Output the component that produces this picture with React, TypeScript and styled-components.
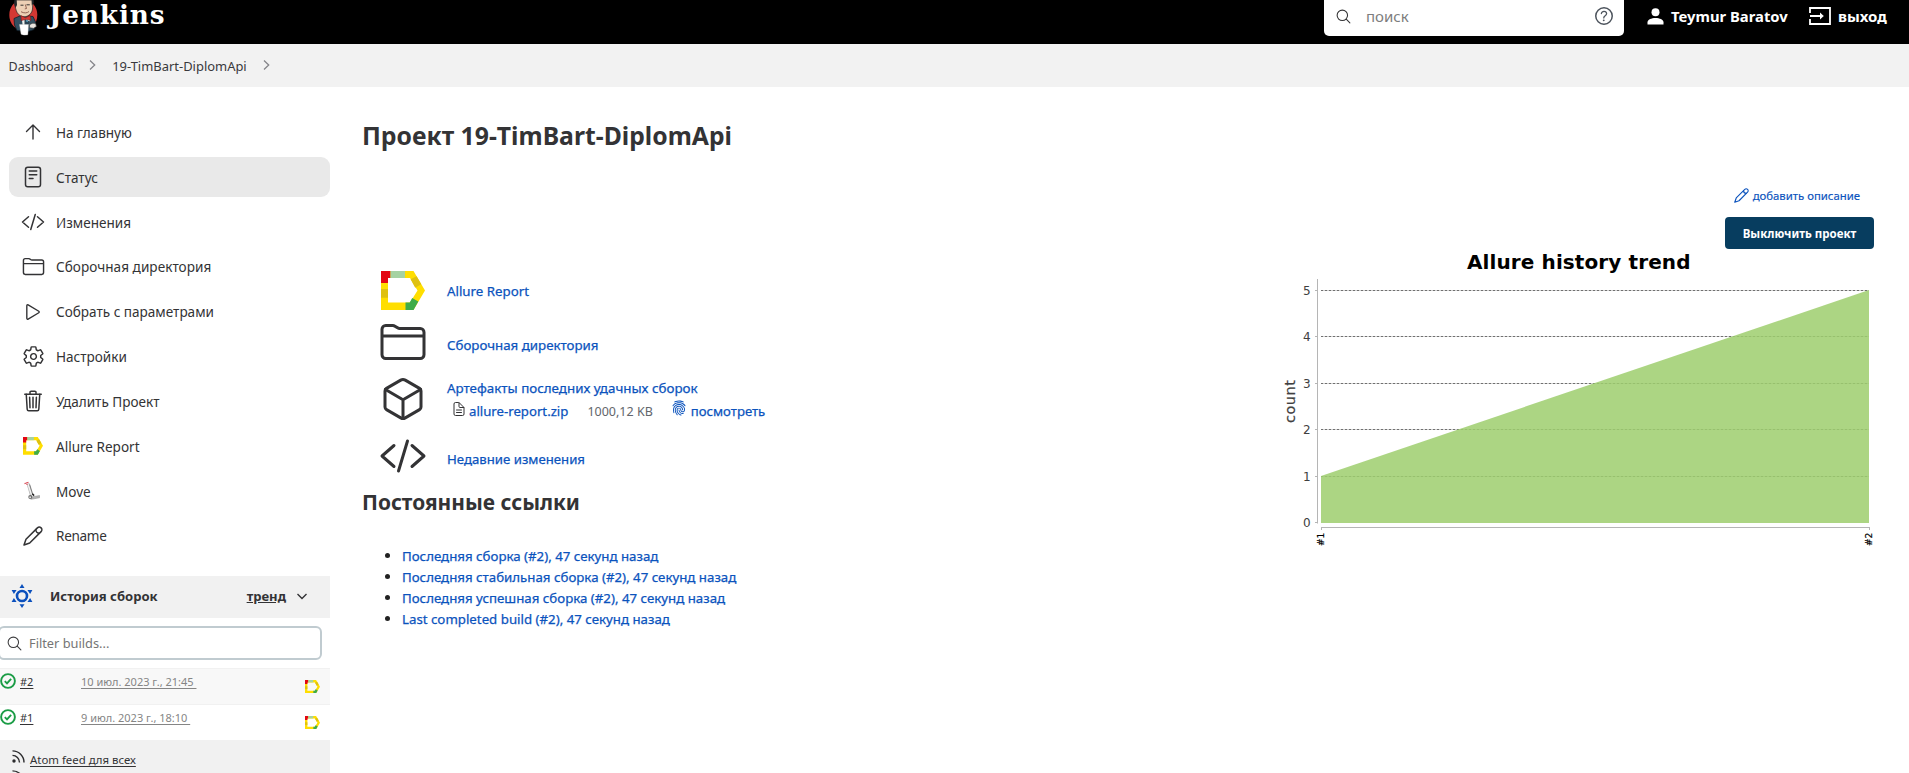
import React from "react";
import styled, { createGlobalStyle } from "styled-components";
import {
  IoCodeSlashOutline,
  IoCubeOutline,
  IoDocumentTextOutline,
  IoFingerPrint,
  IoFolderOutline,
  IoHelpCircleOutline,
  IoPlayOutline,
  IoReaderOutline,
  IoSearchOutline,
  IoSettingsOutline,
  IoTrashOutline,
} from "react-icons/io5";

const BLUE = "#0b53bd";
const INK = "#333335";

const GlobalStyle = createGlobalStyle`
  * { box-sizing: border-box; }
  html, body { margin: 0; padding: 0; background: #fff; overflow: hidden; }
  body { font-family: "Noto Sans", "Open Sans", sans-serif; color: ${INK}; font-size: 13.5px; }
  svg { display: block; flex: none; }
  a { color: inherit; text-decoration: none; }
`;

const Page = styled.div`
  height: 773px;
  overflow: hidden;
  display: flex;
  flex-direction: column;
`;

/* Top bar */
const Header = styled.header`
  height: 44px;
  flex: none;
  background: #000;
  color: #fff;
  display: flex;
  align-items: flex-start;
  padding-left: 8px;
  overflow: hidden;
`;
const Brand = styled.a`
  display: flex;
  flex: 1;
`;
const BrandName = styled.span`
  font: 700 26.3px/29px "DejaVu Serif", serif;
  letter-spacing: 0.85px;
  margin-left: 11px;
`;
const SearchBox = styled.div`
  width: 300px;
  height: 36px;
  background: #fff;
  border-radius: 0 0 5px 5px;
  display: flex;
  align-items: center;
  padding: 0 8px 4px 11px;
  color: ${INK};
`;
const SearchHint = styled.span`
  flex: 1;
  color: #7d7d7d;
  font-size: 15px;
  margin-left: 14px;
`;
const HeaderLink = styled.a<{ $width: number; $size: number }>`
  display: flex;
  align-items: center;
  width: ${(p) => p.$width}px;
  height: 32px;
  font-weight: 700;
  font-size: ${(p) => p.$size}px;
  gap: 7px;
  white-space: nowrap;
`;
const HeaderLinks = styled.nav`
  display: flex;
  padding-left: 23px;
  width: 285px;
`;

/* Breadcrumbs */
const Crumbs = styled.nav`
  height: 43px;
  flex: none;
  background: #f2f2f2;
  display: flex;
  align-items: center;
  padding-left: 8.5px;
  color: #39393c;
`;
const Crumb = styled.a<{ $size: number }>`
  font-size: ${(p) => p.$size}px;
  padding-top: 1px;
  white-space: nowrap;
`;
const CrumbArrow = styled.span`
  margin: 0 16px 1px 16px;
`;

/* Columns */
const Columns = styled.div`
  display: flex;
  flex: 1;
  min-height: 0;
`;
const Sidebar = styled.aside`
  width: 330px;
  flex: none;
  display: flex;
  flex-direction: column;
`;
const Menu = styled.nav`
  padding: 25.4px 0 0 9px;
  height: 489px;
  flex: none;
  display: flex;
  flex-direction: column;
  gap: 4.85px;
`;
const MenuItem = styled.a<{ $active?: boolean }>`
  height: 40px;
  flex: none;
  display: flex;
  align-items: center;
  padding-left: 12px;
  gap: 11px;
  border-radius: 9px;
  background: ${(p) => (p.$active ? "#e9e9e9" : "transparent")};
`;
const MenuIcon = styled.span`
  width: 24px;
  height: 24px;
  display: flex;
  align-items: center;
  justify-content: center;
`;
const MenuText = styled.span<{ $spacing?: number }>`
  font-size: 13.55px;
  letter-spacing: ${(p) => p.$spacing ?? 0}px;
  padding-top: 1px;
  white-space: nowrap;
`;

/* Build history */
const HistoryHead = styled.div`
  height: 42px;
  flex: none;
  background: #f1f1f1;
  display: flex;
  align-items: center;
  padding: 0 23px 2px 10px;
  font-weight: 700;
  font-size: 13.05px;
`;
const HistoryTitle = styled.span`
  flex: 1;
  margin-left: 16px;
`;
const TrendLink = styled.a`
  text-decoration: underline;
  margin-right: 11px;
`;
const FilterBox = styled.div`
  height: 34px;
  flex: none;
  width: 324px;
  margin: 8px 0 8px -2px;
  border: 2px solid #c0cbd0;
  border-radius: 6px;
  display: flex;
  align-items: center;
  gap: 6px;
  padding-left: 6px;
  color: #3c3c3e;
`;
const FilterHint = styled.span`
  color: #757575;
  font-size: 12.8px;
`;
const BuildRow = styled.div<{ $shaded?: boolean }>`
  height: 36px;
  flex: none;
  border-top: 1px solid #f1f1f1;
  background: ${(p) => (p.$shaded ? "#f8f8f8" : "#fff")};
  display: flex;
  align-items: flex-start;
  font-size: 11px;
  line-height: 16px;
`;
const BuildStatus = styled.span`
  margin: 4px 4px 0 0;
`;
const BuildNumber = styled.a`
  width: 61px;
  padding-top: 5px;
  text-decoration: underline;
  text-underline-offset: 2px;
`;
const BuildDate = styled.a`
  flex: 1;
  padding-top: 5px;
  color: #858585;
  text-decoration: underline;
  text-underline-offset: 2px;
`;
const BuildReport = styled.a`
  margin: 11px 10px 0 0;
`;
const Feeds = styled.div`
  flex: 1;
  background: #f1f1f1;
  padding: 10px 0 0 12px;
  overflow: hidden;
`;
const Feed = styled.a`
  display: flex;
  align-items: flex-start;
  gap: 5px;
  height: 20px;
  font-size: 11.4px;
  line-height: 20px;
  text-decoration: underline;
  text-underline-offset: 2px;
`;

/* Main panel */
const Main = styled.main`
  flex: 1;
  display: grid;
  grid-template-columns: 1fr 600px;
  grid-template-rows: 68px 1fr;
  padding: 30px 35px 0 32px;
`;
const Title = styled.h1`
  grid-column: 1 / 3;
  margin: 0;
  font-size: 24.75px;
  line-height: 37px;
  font-weight: 700;
`;
const Content = styled.section`
  padding-top: 79px;
`;
const LinkRow = styled.div<{ $height: number; $nudge: number }>`
  height: ${(p) => p.$height}px;
  display: flex;
  align-items: center;
  padding-left: 17px;
  gap: 20px;
  & > div { padding-top: ${(p) => p.$nudge}px; }
`;
const BigIcon = styled.span`
  width: 48px;
  display: flex;
  justify-content: center;
`;
const Link = styled.a<{ $size?: number }>`
  color: ${BLUE};
  font-size: ${(p) => p.$size ?? 13.3}px;
  line-height: 20px;
  -webkit-text-stroke: 0.25px;
  white-space: nowrap;
`;
const Artifact = styled.div`
  display: flex;
  align-items: center;
  height: 26px;
  padding-left: 4px;
  white-space: nowrap;
`;
const FileSize = styled.span`
  color: #63666c;
  font-size: 12.5px;
  margin: 0 18px 0 19px;
`;
const FileIcon = styled.span`
  margin: 0 2px 5px 0;
`;
const PrintIcon = styled.span`
  color: ${BLUE};
  margin: 0 4px 7px 0;
`;
const Subtitle = styled.h2`
  margin: 0;
  padding-top: 3px;
  font-size: 20.9px;
  line-height: 34px;
  font-weight: 700;
`;
const Permalinks = styled.ul`
  list-style: none;
  margin: 0;
  padding: 26px 0 0 23px;
`;
const Permalink = styled.li`
  height: 21px;
  display: flex;
  align-items: center;
  gap: 12px;
  &::before {
    content: "";
    width: 5px;
    height: 5px;
    border-radius: 50%;
    background: #222;
    margin-bottom: 1px;
  }
`;

const Actions = styled.section`
  display: flex;
  flex-direction: column;
  align-items: flex-end;
`;
const DescriptionLink = styled.a`
  display: flex;
  align-items: center;
  gap: 4px;
  height: 21px;
  margin-right: 14px;
  color: ${BLUE};
  font-size: 11.35px;
  -webkit-text-stroke: 0.15px;
`;
const DisableButton = styled.button`
  margin-top: 11px;
  width: 149px;
  height: 32px;
  border: 0;
  border-radius: 4px;
  background: #073d5f;
  color: #fff;
  font: 700 11.5px "Noto Sans", sans-serif;
  padding: 0;
`;
const ChartFrame = styled.div`
  padding-top: 1px;
`;

const AllureLogo = ({ width }: { width: number }) => (
  <svg width={width} height={(width * 39) / 44} viewBox="0 0 44 39">
    <path fill="#ffde00" fillRule="evenodd" d="M0 0H32.5L44 19.5 32.5 39H0ZM7 7V31.5H29L36.5 19.5 29 7Z" />
    <path fill="#e30613" d="M0 0H9.5V7H7V12H0Z" />
    <path fill="#a5d2a2" d="M9.5 0H24V7H9.5Z" />
    <path fill="#dfc110" d="M0 18H7V26.7H0ZM35.6 5.2 40.3 13.2 34.2 16.8 29.6 8.2Z" />
    <path fill="#3fac49" d="M24.5 39H32.5L37.3 30.6 31.2 27 28.7 31.5H24.5Z" />
  </svg>
);

const UpArrow = () => (
  <svg width="16" height="16" viewBox="0 0 16 16" fill="none" stroke="currentColor" strokeWidth="1.4" strokeLinecap="round" strokeLinejoin="round">
    <path d="M8 15V1.200M1.500 7.500 8 1 14.500 7.500" />
  </svg>
);

const Pen = ({ size, weight = 1.6 }: { size: number; weight?: number }) => (
  <svg width={size} height={size} viewBox="0 0 20 20" fill="none" stroke="currentColor" strokeWidth={weight} strokeLinejoin="round" strokeLinecap="round">
    <path d="M1 19 3 13.3 14.4 1.9a2.5 2.5 0 0 1 3.7 3.7L6.7 17Z" />
    <path d="M12.8 3.6c0 2 1.6 3.6 3.6 3.6" />
  </svg>
);

const HandTruck = () => (
  <svg width="20" height="20" viewBox="0 0 20 20" fill="none">
    <path d="M5 2.500 8.500 14.500" stroke="#b5b5b5" strokeWidth="2.8" />
    <path d="M5 3 8.500 14" stroke="#f2f2f2" strokeWidth="1.4" />
    <path d="M6.700 3.500 9.800 13.500" stroke="#666" strokeWidth=".8" />
    <path d="M1.500 2.600 5.500 1.200M4 1v3" stroke="#dd5560" strokeWidth="1.2" />
    <path d="M6 16.500 16.500 14.500v2.300L8 18.300Z" fill="#b5b5b5" stroke="#888" strokeWidth=".5" />
    <circle cx="7.300" cy="16" r="2" fill="#666" />
    <circle cx="7.200" cy="16.200" r="1" fill="#ddd" />
    <path d="m9.300 12.800 1.800 1.800" stroke="#222" strokeWidth="1.500" />
  </svg>
);

const Butler = () => (
  <svg width="30" height="36" viewBox="0 0 30 36">
    <ellipse cx="15.300" cy="15" rx="14" ry="15.500" fill="#d33833" />
    <path d="M6 18.500 13 15.500 25 16.500 27.500 22 26 29.500 20 31.500 9 30.500 6.500 25Z" fill="#335061" stroke="#12202a" strokeWidth=".8" />
    <path d="M7.500 0C6.500 5 7.500 13 12 15.500 17 19 24 15 24.500 9L25 0Z" fill="#edd0b5" stroke="#222" strokeWidth=".7" />
    <path d="M6.500 0C5.800 3 6 5.500 7.800 7.500L9 5 8.700 0ZM23.500 0 23.800 5.500 25.800 3 25.500 0Z" fill="#24282b" />
    <path d="M12.500 5.200h3M18.500 4.800h3.300" stroke="#222" strokeWidth=".9" />
    <path d="M13 11.700c3 1.700 6 1.500 8-.2M17.300 4.500l1.200 4-1.700.4" fill="none" stroke="#7b4a3c" strokeWidth=".8" />
    <path d="M13.500 16.300 18 19.500 22 16.500 21 28H15Z" fill="#f2f2ee" />
    <path d="M16.500 19 22 21.500 21 29 16.500 27Z" fill="#2b4352" />
    <path d="M13 15.700 17.400 17.700 22 15.500 23 20.200 18 19.300 13.300 20.600Z" fill="#d33833" stroke="#7e1616" strokeWidth=".6" />
    <path d="M21.500 25c1.800-1.900 4.700-2.300 6.300-1.200l.6 2.700-2.800 1.800-3.900-.5Z" fill="#e9e5df" stroke="#333" strokeWidth=".6" />
    <path d="M11.500 24.500h9l-.7 10.200q-3.500 1-6.700-.5Z" fill="#fff" stroke="#ccc" strokeWidth=".4" />
    <path d="m18 20.500 2 1" stroke="#5599b5" strokeWidth="1.500" />
  </svg>
);

const Chevron = () => (
  <svg width="7" height="10" viewBox="0 0 7 10" fill="none" stroke="#85858a" strokeWidth="1.3">
    <path d="M1 .5 5.700 5 1 9.500" />
  </svg>
);

const SunIcon = () => (
  <svg width="24" height="26" viewBox="0 0 24 26" fill="#0b50bd">
    <circle cx="12" cy="13" r="5" fill="none" stroke="#0b50bd" strokeWidth="2.6" />
    <path d="M12 1 14.500 5h-5ZM12 25 9.500 21.200h5ZM1.600 7h5l-2.700 4ZM22.400 7h-5l2.700 4ZM1.600 19h5L3.900 15ZM22.400 19h-5l2.700-4Z" />
  </svg>
);

const SuccessIcon = () => (
  <svg width="16" height="16" viewBox="0 0 16 16" fill="none" stroke="#1a9c45" strokeWidth="1.9">
    <circle cx="8" cy="8" r="6.900" />
    <path d="m4.800 8.200 2.200 2.200 4.100-4.500" />
  </svg>
);

const FeedIcon = () => (
  <svg width="13" height="13" viewBox="0 0 13 13" fill="none" stroke="#2b2b2d" strokeWidth="1.4">
    <circle cx="2" cy="11" r="1.700" fill="#2b2b2d" stroke="none" />
    <path d="M.5 5.400A7 7 0 0 1 7.500 12.400M.5.900A11.500 11.500 0 0 1 12 12.400" />
  </svg>
);

const PersonIcon = () => (
  <svg width="17" height="17" viewBox="0 0 17 17" fill="#fff">
    <circle cx="8.500" cy="4.300" r="4" />
    <path d="M.5 16.500v-2.300c0-2.600 4-4.200 8-4.200s8 1.600 8 4.200v2.300Z" />
  </svg>
);

const LogoutIcon = () => (
  <svg width="22" height="18" viewBox="0 0 22 18" fill="none" stroke="#fff" strokeWidth="1.8">
    <path d="M1 6V1H21V17H1V12M1 9H13" />
    <path d="M11 5.500 14.800 9 11 12.500Z" fill="#fff" stroke="none" />
  </svg>
);

const levels = [5, 4, 3, 2, 1];
const levelY = (value: number) => Math.round(272.4 - value * 46.5) + 0.5;

const ChartTitle = styled.text`
  font: 700 20px "DejaVu Sans", sans-serif;
`;
const AxisText = styled.text<{ $size: number; $color?: string; $stroke?: number }>`
  font: ${(p) => p.$size}px "DejaVu Sans", sans-serif;
  fill: ${(p) => p.$color ?? "#404040"};
  stroke: ${(p) => p.$color ?? "#404040"};
  stroke-width: ${(p) => p.$stroke ?? 0}px;
`;

const TrendChart = () => (
  <svg width="600" height="300" viewBox="0 0 600 300">
    <ChartTitle x="193" y="19" textLength="223.500">Allure history trend</ChartTitle>
    {levels.map((v) => (
      <g key={v}>
        <path d={`M47 ${levelY(v)}H595`} stroke="#d0d0d0" />
        <path d={`M47 ${levelY(v)}H595`} stroke="#707070" strokeDasharray="2 2" />
      </g>
    ))}
    <path d="M47 226 595 40V273H47Z" fill="rgb(157,206,109)" fillOpacity=".85" />
    <path d="M43.500 29V273.500M47 277.500H596M47.500 278v2M595.500 278v2" stroke="#b5b5b5" fill="none" />
    {[...levels, 0].map((v) => (
      <g key={v}>
        <path d={`M41 ${levelY(v)}H43`} stroke="#b5b5b5" />
        <AxisText $size={12} x="29" y={levelY(v) + 4.5}>{v}</AxisText>
      </g>
    ))}
    <AxisText $size={14.5} $stroke={0.2} textLength="43" transform="translate(21 173) rotate(-90)">count</AxisText>
    <AxisText $size={9} $color="#000" $stroke={0.2} transform="translate(49.500 296) rotate(-90)">#1</AxisText>
    <AxisText $size={9} $color="#000" $stroke={0.2} transform="translate(597.500 296) rotate(-90)">#2</AxisText>
  </svg>
);

const menu: { text: string; icon: React.ReactNode; spacing?: number; active?: boolean }[] = [
  { text: "На главную", icon: <UpArrow /> },
  { text: "Статус", icon: <IoReaderOutline size={24} />, active: true },
  { text: "Изменения", icon: <IoCodeSlashOutline size={24} /> },
  { text: "Сборочная директория", icon: <IoFolderOutline size={23} />, spacing: 0.05 },
  { text: "Собрать с параметрами", icon: <IoPlayOutline size={22} /> },
  { text: "Настройки", icon: <IoSettingsOutline size={23} /> },
  { text: "Удалить Проект", icon: <IoTrashOutline size={24} /> },
  { text: "Allure Report", icon: <AllureLogo width={20} /> },
  { text: "Move", icon: <HandTruck /> },
  { text: "Rename", icon: <Pen size={20} weight={1.5} />, spacing: -0.3 },
];

const builds = [
  { number: "#2", date: "10 июл. 2023 г., 21:45\u00a0", shaded: true },
  { number: "#1", date: "9 июл. 2023 г., 18:10\u00a0", shaded: false },
];

const permalinks = [
  "Последняя сборка (#2), 47 секунд назад",
  "Последняя стабильная сборка (#2), 47 секунд назад",
  "Последняя успешная сборка (#2), 47 секунд назад",
  "Last completed build (#2), 47 секунд назад",
];

export default function App() {
  return (
    <Page>
      <GlobalStyle />
      <Header>
        <Brand>
          <Butler />
          <BrandName>Jenkins</BrandName>
        </Brand>
        <SearchBox>
          <IoSearchOutline size={17} />
          <SearchHint>поиск</SearchHint>
          <IoHelpCircleOutline size={24} color="#4d545d" />
        </SearchBox>
        <HeaderLinks>
          <HeaderLink $width={162} $size={14.8}>
            <PersonIcon />
            Teymur Baratov
          </HeaderLink>
          <HeaderLink $width={90} $size={15}>
            <LogoutIcon />
            выход
          </HeaderLink>
        </HeaderLinks>
      </Header>
      <Crumbs>
        <Crumb $size={12.5}>Dashboard</Crumb>
        <CrumbArrow><Chevron /></CrumbArrow>
        <Crumb $size={12.95}>19-TimBart-DiplomApi</Crumb>
        <CrumbArrow><Chevron /></CrumbArrow>
      </Crumbs>
      <Columns>
        <Sidebar>
          <Menu>
            {menu.map((m) => (
              <MenuItem key={m.text} $active={m.active}>
                <MenuIcon>{m.icon}</MenuIcon>
                <MenuText $spacing={m.spacing}>{m.text}</MenuText>
              </MenuItem>
            ))}
          </Menu>
          <HistoryHead>
            <SunIcon />
            <HistoryTitle>История сборок</HistoryTitle>
            <TrendLink>тренд</TrendLink>
            <svg width="10" height="7" viewBox="0 0 10 7" fill="none" stroke={INK} strokeWidth="1.400">
              <path d="M.5 1 5 5.500 9.500 1" />
            </svg>
          </HistoryHead>
          <FilterBox>
            <IoSearchOutline size={17} />
            <FilterHint>Filter builds...</FilterHint>
          </FilterBox>
          {builds.map((b) => (
            <BuildRow key={b.number} $shaded={b.shaded}>
              <BuildStatus><SuccessIcon /></BuildStatus>
              <BuildNumber>{b.number}</BuildNumber>
              <BuildDate>{b.date}</BuildDate>
              <BuildReport><AllureLogo width={15} /></BuildReport>
            </BuildRow>
          ))}
          <Feeds>
            <Feed><FeedIcon />Atom feed для всех</Feed>
            <Feed><FeedIcon /></Feed>
          </Feeds>
        </Sidebar>
        <Main>
          <Title>Проект 19-TimBart-DiplomApi</Title>
          <Content>
            <LinkRow $height={52} $nudge={1}>
              <BigIcon><AllureLogo width={44} /></BigIcon>
              <div><Link>Allure Report</Link></div>
            </LinkRow>
            <LinkRow $height={52} $nudge={5}>
              <BigIcon><IoFolderOutline size={48} /></BigIcon>
              <div><Link>Сборочная директория</Link></div>
            </LinkRow>
            <LinkRow $height={62} $nudge={4}>
              <BigIcon><IoCubeOutline size={48} /></BigIcon>
              <div>
                <Link $size={13.37}>Артефакты последних удачных сборок</Link>
                <Artifact>
                  <FileIcon><IoDocumentTextOutline size={16} /></FileIcon>
                  <Link $size={13.2}>allure-report.zip</Link>
                  <FileSize>1000,12 KB</FileSize>
                  <PrintIcon><IoFingerPrint size={16} /></PrintIcon>
                  <Link $size={13.15}>посмотреть</Link>
                </Artifact>
              </div>
            </LinkRow>
            <LinkRow $height={52} $nudge={6}>
              <BigIcon><IoCodeSlashOutline size={48} /></BigIcon>
              <div><Link $size={13.2}>Недавние изменения</Link></div>
            </LinkRow>
            <Subtitle>Постоянные ссылки</Subtitle>
            <Permalinks>
              {permalinks.map((text) => (
                <Permalink key={text}><Link $size={13.27}>{text}</Link></Permalink>
              ))}
            </Permalinks>
          </Content>
          <Actions>
            <DescriptionLink><Pen size={15} weight={1.5} />добавить описание</DescriptionLink>
            <DisableButton>Выключить проект</DisableButton>
            <ChartFrame><TrendChart /></ChartFrame>
          </Actions>
        </Main>
      </Columns>
    </Page>
  );
}
